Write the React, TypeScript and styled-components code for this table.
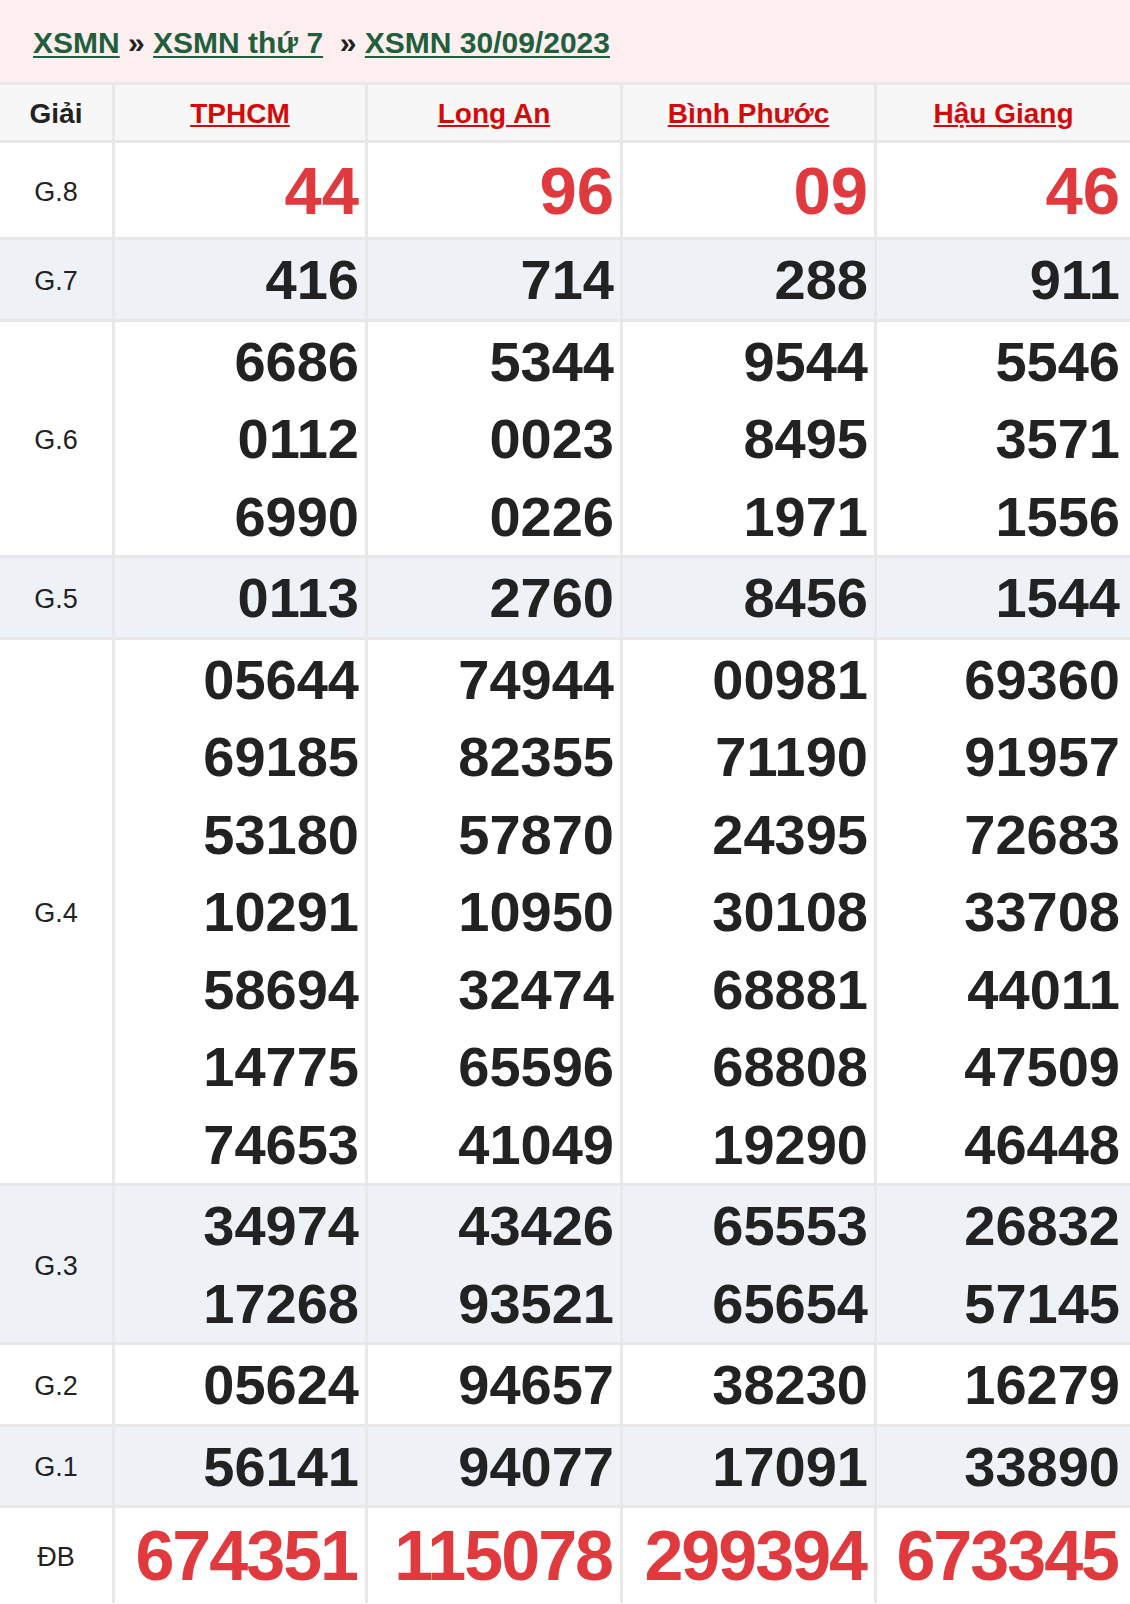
import React from "react";
import styled, { createGlobalStyle } from "styled-components";

const GlobalStyle = createGlobalStyle`
  *, *::before, *::after { box-sizing: border-box; }
  html, body { margin: 0; padding: 0; background: #ffffff; }
  body { font-family: "Liberation Sans", Arial, sans-serif; color: #222222; }
`;

const Page = styled.div`
  width: 100%;
  overflow: hidden;
`;

const Breadcrumb = styled.div`
  background: #fdefef;
  padding: 26px 33px 22px;
  font-size: 30px;
  line-height: 34px;
  font-weight: 700;
  white-space: nowrap;
`;

const Crumb = styled.a`
  color: #215e3b;
  text-decoration: underline;
  text-decoration-thickness: 2px;
  text-underline-offset: 3px;
`;

const Sep = styled.span`
  color: #222222;
  white-space: pre;
`;

const Table = styled.table`
  width: 100%;
  border-collapse: separate;
  border-spacing: 0;
  table-layout: fixed;
`;

const HeadCell = styled.th`
  background: #f7f7f7;
  border-top: 3px solid #e8e8e8;
  border-left: 3px solid #e8e8e8;
  &:first-child { border-left: none; }
  padding: 3px 0 0;
  height: 58px;
  line-height: 52px;
  font-size: 28px;
  font-weight: 700;
  text-align: center;
  color: #222222;
`;

const ProvinceLink = styled.a`
  color: #d40a0a;
  text-decoration: underline;
  text-decoration-thickness: 2px;
  text-underline-offset: 2px;
`;

const Row = styled.tr<{ $alt?: boolean }>`
  background: ${(p) => (p.$alt ? "#eef2f7" : "#ffffff")};
`;

const LabelCell = styled.td`
  border-top: 3px solid #e8e8e8;
  font-size: 27px;
  text-align: center;
  vertical-align: middle;
  color: #222222;
  padding: 4px 0 0;
`;

const NumCell = styled.td<{ $last?: boolean }>`
  border-top: 3px solid #e8e8e8;
  border-left: 3px solid #e8e8e8;
  text-align: right;
  vertical-align: top;
  padding: 1px ${(p) => (p.$last ? "10px" : "6px")} 0 0;
`;

type Kind = "normal" | "g8" | "db";

const Num = styled.div<{ $kind: Kind }>`
  font-weight: 700;
  white-space: nowrap;
  font-size: ${(p) => (p.$kind === "g8" ? "67px" : p.$kind === "db" ? "70px" : "56px")};
  line-height: ${(p) => (p.$kind === "g8" ? "93px" : p.$kind === "db" ? "94px" : "77.5px")};
  letter-spacing: ${(p) => (p.$kind === "db" ? "-2px" : "0")};
  padding-right: ${(p) => (p.$kind === "db" ? "2px" : "0")};
  color: ${(p) => (p.$kind === "normal" ? "#222222" : "#e03a3e")};
`;

const provinces = ["TPHCM", "Long An", "Bình Phước", "Hậu Giang"];

const prizes: { label: string; kind: Kind; values: string[][] }[] = [
  { label: "G.8", kind: "g8", values: [["44"], ["96"], ["09"], ["46"]] },
  { label: "G.7", kind: "normal", values: [["416"], ["714"], ["288"], ["911"]] },
  {
    label: "G.6",
    kind: "normal",
    values: [
      ["6686", "0112", "6990"],
      ["5344", "0023", "0226"],
      ["9544", "8495", "1971"],
      ["5546", "3571", "1556"],
    ],
  },
  { label: "G.5", kind: "normal", values: [["0113"], ["2760"], ["8456"], ["1544"]] },
  {
    label: "G.4",
    kind: "normal",
    values: [
      ["05644", "69185", "53180", "10291", "58694", "14775", "74653"],
      ["74944", "82355", "57870", "10950", "32474", "65596", "41049"],
      ["00981", "71190", "24395", "30108", "68881", "68808", "19290"],
      ["69360", "91957", "72683", "33708", "44011", "47509", "46448"],
    ],
  },
  {
    label: "G.3",
    kind: "normal",
    values: [
      ["34974", "17268"],
      ["43426", "93521"],
      ["65553", "65654"],
      ["26832", "57145"],
    ],
  },
  { label: "G.2", kind: "normal", values: [["05624"], ["94657"], ["38230"], ["16279"]] },
  { label: "G.1", kind: "normal", values: [["56141"], ["94077"], ["17091"], ["33890"]] },
  { label: "ĐB", kind: "db", values: [["674351"], ["115078"], ["299394"], ["673345"]] },
];

export default function App() {
  return (
    <Page>
      <GlobalStyle />
      <Breadcrumb>
        <Crumb href="#">XSMN</Crumb>
        <Sep>{" » "}</Sep>
        <Crumb href="#">XSMN thứ 7</Crumb>
        <Sep>{"\u00a0 » "}</Sep>
        <Crumb href="#">XSMN 30/09/2023</Crumb>
      </Breadcrumb>
      <Table>
        <colgroup>
          <col style={{ width: 112 }} />
          <col style={{ width: 253 }} />
          <col style={{ width: 255 }} />
          <col style={{ width: 254 }} />
          <col style={{ width: 256 }} />
        </colgroup>
        <thead>
          <tr>
            <HeadCell>Giải</HeadCell>
            {provinces.map((p) => (
              <HeadCell key={p}>
                <ProvinceLink href="#">{p}</ProvinceLink>
              </HeadCell>
            ))}
          </tr>
        </thead>
        <tbody>
          {prizes.map((prize, i) => (
            <Row key={prize.label} $alt={i % 2 === 1}>
              <LabelCell>{prize.label}</LabelCell>
              {prize.values.map((col, c) => (
                <NumCell key={c} $last={c === 3}>
                  {col.map((v, k) => (
                    <Num key={k} $kind={prize.kind}>
                      {v}
                    </Num>
                  ))}
                </NumCell>
              ))}
            </Row>
          ))}
        </tbody>
      </Table>
    </Page>
  );
}
